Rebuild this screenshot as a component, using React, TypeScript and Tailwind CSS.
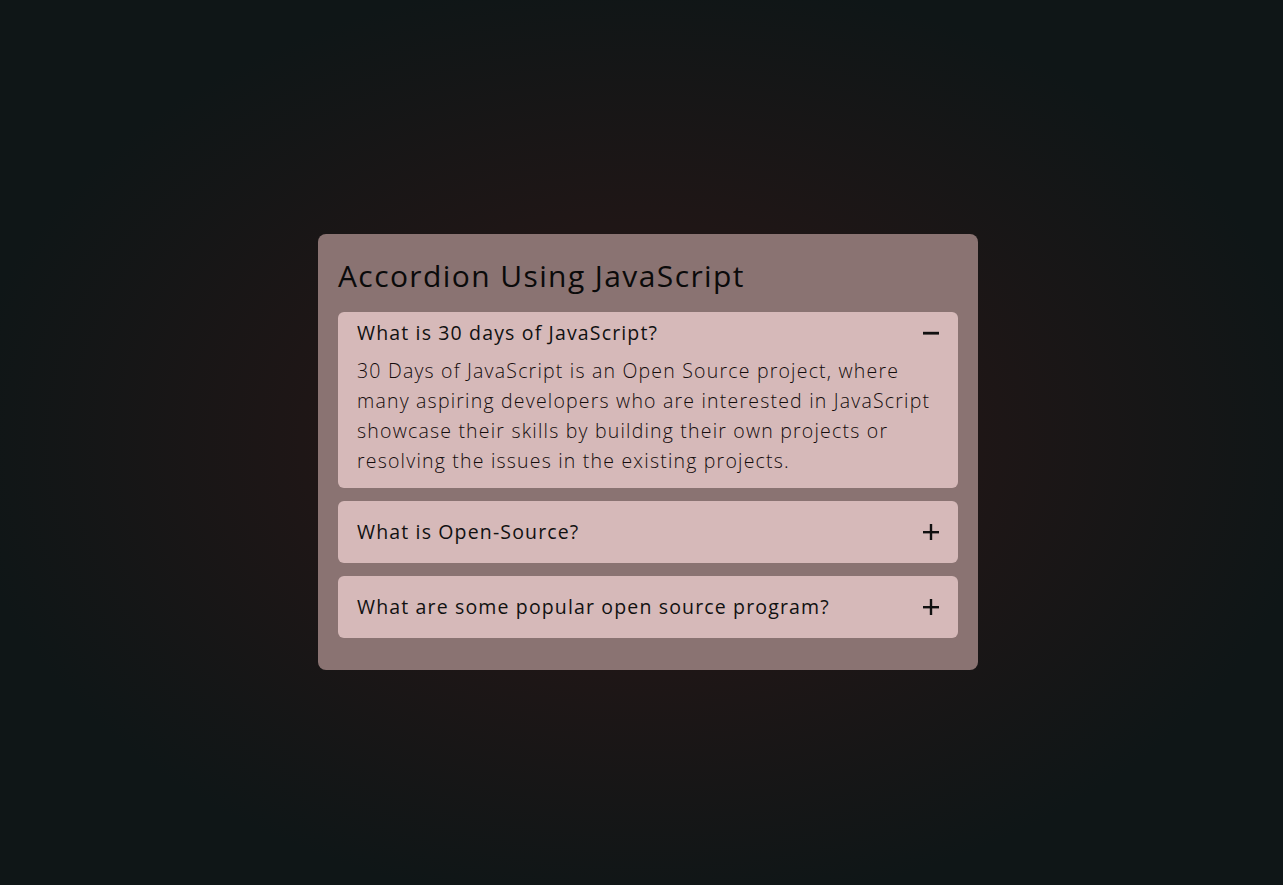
import React from "react";

const Plus = () => (
  <svg width="16" height="16" viewBox="0 0 16 16" className="shrink-0">
    <rect x="0" y="7" width="16" height="2.4" fill="#111" />
    <rect x="6.8" y="0" width="2.4" height="16" fill="#111" />
  </svg>
);
const Minus = () => (
  <svg width="16" height="16" viewBox="0 0 16 16" className="shrink-0">
    <rect x="0" y="6.8" width="16" height="2.8" fill="#111" />
  </svg>
);

export default function App() {
  const font = { fontFamily: '"Open Sans", "Noto Sans", sans-serif' };
  return (
    <div
      className="w-full min-h-screen h-[885px] flex items-center justify-center bg-[radial-gradient(ellipse_at_center,#2a1616_0%,#1f1616_35%,#0f1617_75%)]"
      style={font}
    >
      <div className="w-[660px] bg-[#8a7372] rounded-lg px-5 pt-[22px] pb-8 mt-[18px] ml-[13px]">
        <h1 className="text-[30px] leading-[40px] text-[#0a0a0a] font-normal tracking-[1.4px] mb-[16px]">
          Accordion Using JavaScript
        </h1>
        <div className="flex flex-col gap-[13px]">
          <div className="bg-[#d6b9b9] rounded-md px-[19px] pt-[10px] pb-[12px]">
            <div className="flex items-center justify-between h-[22px]">
              <span className="text-[19.5px] font-medium text-[#111] tracking-[1.15px]">
                What is 30 days of JavaScript?
              </span>
              <Minus />
            </div>
            <p className="mt-[12px] text-[19.5px] leading-[30px] font-light text-[#140c0c] tracking-[1.2px]">
              30 Days of JavaScript is an Open Source project, where many aspiring developers who are interested in JavaScript showcase their skills by building their own projects or resolving the issues in the existing projects.
            </p>
          </div>
          <div className="bg-[#d6b9b9] rounded-md px-[19px] h-[62px] flex items-center justify-between">
            <span className="text-[19.5px] font-medium text-[#111] tracking-[1.15px]">What is Open-Source?</span>
            <Plus />
          </div>
          <div className="bg-[#d6b9b9] rounded-md px-[19px] h-[62px] flex items-center justify-between">
            <span className="text-[19.5px] font-medium text-[#111] tracking-[1.15px]">
              What are some popular open source program?
            </span>
            <Plus />
          </div>
        </div>
      </div>
    </div>
  );
}
